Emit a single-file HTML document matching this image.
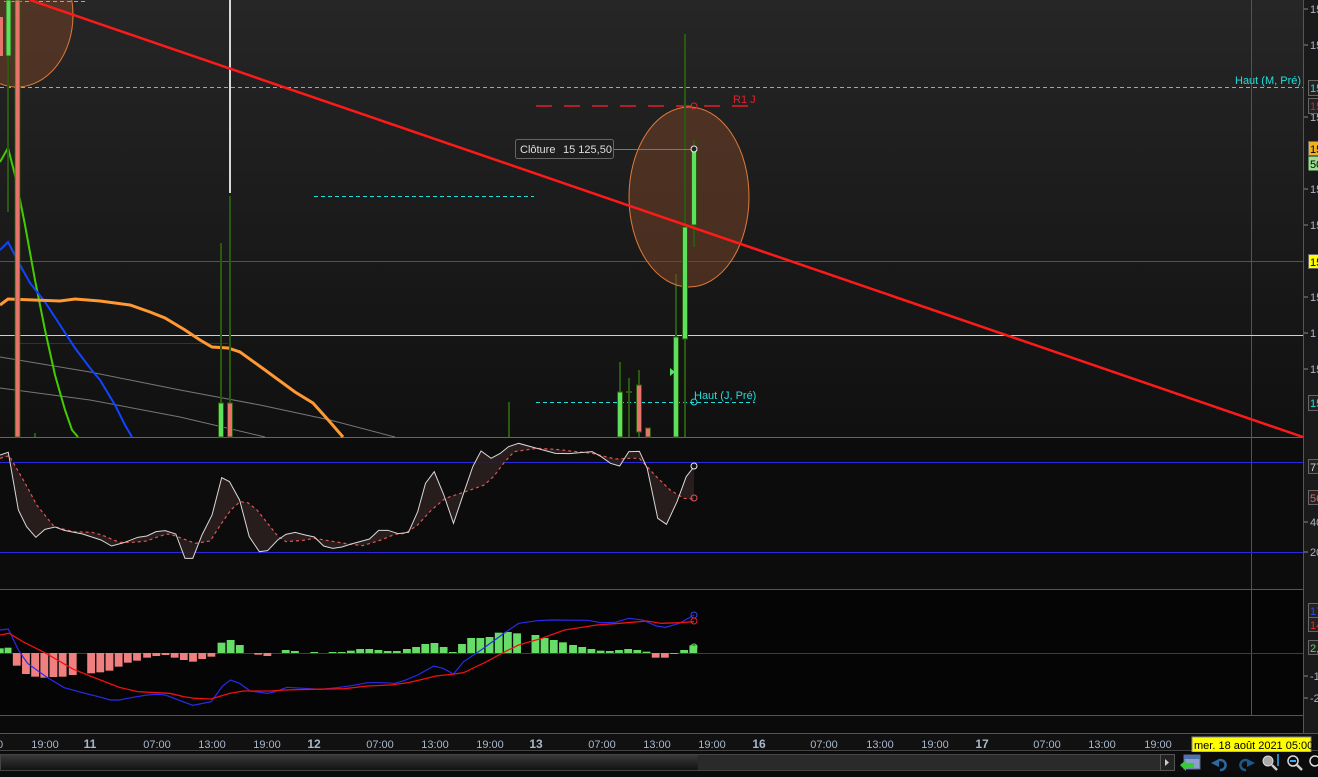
<!DOCTYPE html>
<html><head><meta charset="utf-8"><style>
html,body{margin:0;padding:0;background:#0a0a0a;}
body{width:1318px;height:772px;overflow:hidden;font-family:"Liberation Sans",sans-serif;}
svg text{font-family:"Liberation Sans",sans-serif;}
</style></head><body>
<svg width="1318" height="772" viewBox="0 0 1318 772" xmlns="http://www.w3.org/2000/svg">
<defs>
<linearGradient id="bg" x1="0" y1="0" x2="0" y2="1"><stop offset="0" stop-color="#262626"/><stop offset="1" stop-color="#101010"/></linearGradient>
<linearGradient id="sb" x1="0" y1="0" x2="0" y2="1"><stop offset="0" stop-color="#3a3a3a"/><stop offset="1" stop-color="#111"/></linearGradient>
</defs>
<rect x="0" y="0" width="1318" height="772" fill="#0a0a0a"/>
<rect x="0" y="0" width="1303" height="437" fill="url(#bg)"/>
<rect x="0" y="438" width="1303" height="151" fill="#0c0c0c"/>
<rect x="0" y="590" width="1303" height="125" fill="#050505"/>
<rect x="1303" y="0" width="15" height="733" fill="#1a1a1a"/>
<line x1="1303.5" y1="0" x2="1303.5" y2="733" stroke="#555"/>
<line x1="0" y1="437.5" x2="1303" y2="437.5" stroke="#666"/>
<line x1="0" y1="589.5" x2="1303" y2="589.5" stroke="#555"/>
<line x1="0" y1="715.5" x2="1303" y2="715.5" stroke="#555"/>
<line x1="0" y1="733.5" x2="1318" y2="733.5" stroke="#555"/>
<rect x="0" y="734" width="1318" height="17" fill="#111"/>
<line x1="0" y1="750.5" x2="1318" y2="750.5" stroke="#444"/>

<ellipse cx="17" cy="15" rx="56" ry="72" fill="rgba(115,65,40,0.55)" stroke="#e07a3a" stroke-width="1"/>
<line x1="4" y1="1.5" x2="88" y2="1.5" stroke="#22dddd" stroke-dasharray="4,3"/>
<line x1="0" y1="87.5" x2="1303" y2="87.5" stroke="#22dddd" stroke-dasharray="4,3"/>
<line x1="314" y1="196.5" x2="534" y2="196.5" stroke="#22dddd" stroke-dasharray="4,3"/>
<line x1="536" y1="402.5" x2="755" y2="402.5" stroke="#22dddd" stroke-dasharray="4,3"/>
<line x1="536" y1="106" x2="752" y2="106" stroke="#e0202a" stroke-width="1.5" stroke-dasharray="16,12"/>
<line x1="0" y1="261.5" x2="1303" y2="261.5" stroke="#8a3c3c"/>
<line x1="1251.5" y1="0" x2="1251.5" y2="715" stroke="#8a3c3c"/>
<line x1="0" y1="335.5" x2="1303" y2="335.5" stroke="#cfcfcf"/>
<line x1="20" y1="343.5" x2="228" y2="343.5" stroke="#1a1aee"/>
<line x1="230" y1="0" x2="230" y2="193" stroke="#d8d8d8" stroke-width="2"/>
<polyline points="0,357 90,372 180,390 260,405 330,420 395,437" fill="none" stroke="#777" stroke-width="1"/>
<polyline points="0,388 90,400 180,417 265,437" fill="none" stroke="#777" stroke-width="1"/>
<polyline points="0,162 8,148 15,175 25,225 35,280 45,330 55,375 65,410 72,430 78,437" fill="none" stroke="#44cc00" stroke-width="2"/>
<polyline points="0,250 8,242 20,265 30,283 45,302 60,325 75,348 90,368 100,380 115,405 125,425 132,437" fill="none" stroke="#1144ff" stroke-width="2"/>
<polyline points="0,305 8,299 60,301 75,299 100,301 130,305 150,312 165,318 185,330 200,340 212,347 228,348 240,352 265,370 295,392 313,403 330,422 343,437" fill="none" stroke="#ff9933" stroke-width="3"/>
<line x1="8" y1="56" x2="8" y2="212" stroke="#2a5a10" stroke-width="2"/>
<rect x="0" y="17" width="3" height="39" fill="#e8736b"/>
<rect x="6" y="0" width="5" height="56" fill="#5de05d" stroke="#2a5a10"/>
<rect x="15" y="0" width="5" height="437" fill="#e8736b" stroke="#2a5a10" stroke-width="0.8"/>
<line x1="221" y1="243" x2="221" y2="403" stroke="#2a5a10" stroke-width="2"/>
<line x1="230" y1="196" x2="230" y2="403" stroke="#2a5a10" stroke-width="2"/>
<rect x="218.5" y="403" width="5" height="34" fill="#5de05d" stroke="#2a5a10"/>
<rect x="227.5" y="403" width="5" height="34" fill="#e8736b" stroke="#2a5a10"/>
<line x1="35" y1="433" x2="35" y2="437" stroke="#2a5a10" stroke-width="2"/>
<line x1="509" y1="402" x2="509" y2="437" stroke="#2a5a10" stroke-width="2"/>
<line x1="620" y1="362" x2="620" y2="392" stroke="#2a5a10" stroke-width="2"/>
<rect x="617.5" y="392" width="5" height="45" fill="#5de05d" stroke="#2a5a10"/>
<line x1="629" y1="378" x2="629" y2="437" stroke="#2a5a10" stroke-width="2"/>
<line x1="626" y1="392" x2="632" y2="392" stroke="#2a5a10" stroke-width="2"/>
<line x1="639" y1="370" x2="639" y2="437" stroke="#2a5a10" stroke-width="2"/>
<rect x="636.5" y="385" width="5" height="47" fill="#e8736b" stroke="#2a5a10"/>
<rect x="645.5" y="428" width="5" height="9" fill="#e8736b" stroke="#2a5a10"/>
<line x1="676" y1="274" x2="676" y2="337" stroke="#2a5a10" stroke-width="2"/>
<rect x="673.5" y="337" width="5" height="100" fill="#5de05d" stroke="#2a5a10"/>
<polygon points="670,368 675,372 670,376" fill="#5de05d"/>
<ellipse cx="689" cy="197" rx="60" ry="90" fill="rgba(115,65,40,0.55)" stroke="#e07a3a" stroke-width="1"/>
<line x1="685" y1="34" x2="685" y2="437" stroke="#2a5a10" stroke-width="2"/>
<rect x="682.5" y="227" width="5" height="112" fill="#5de05d" stroke="#2a5a10"/>
<line x1="694" y1="140" x2="694" y2="247" stroke="#2a5a10" stroke-width="2"/>
<rect x="691.5" y="149" width="5" height="76" fill="#5de05d" stroke="#2a5a10"/>
<line x1="30" y1="0" x2="1303" y2="437" stroke="#ff1a1a" stroke-width="2.5"/>
<line x1="613" y1="149.5" x2="694" y2="149.5" stroke="#777"/>
<rect x="515.5" y="139.5" width="98" height="19" rx="2" fill="#1e1e1e" stroke="#666"/>
<text x="520" y="153" font-size="11" fill="#ddd">Clôture</text>
<text x="563" y="153" font-size="11" fill="#ddd">15 125,50</text>
<circle cx="694" cy="149" r="3" fill="#222" stroke="#eee"/>
<circle cx="694" cy="106" r="3" fill="none" stroke="#e0202a"/>
<circle cx="694" cy="402" r="3" fill="none" stroke="#22dddd"/>
<text x="733" y="103" font-size="11" fill="#e0202a">R1 J</text>
<text x="694" y="399" font-size="11" fill="#22dddd">Haut (J, Pré)</text>
<text x="1235" y="84" font-size="11" fill="#22dddd">Haut (M, Pré)</text>

<g font-size="11" fill="#a8b4c4">
<g stroke="#888"><line x1="1304" y1="9" x2="1308" y2="9"/><line x1="1304" y1="45" x2="1308" y2="45"/><line x1="1304" y1="117" x2="1308" y2="117"/><line x1="1304" y1="189" x2="1308" y2="189"/><line x1="1304" y1="225" x2="1308" y2="225"/><line x1="1304" y1="297" x2="1308" y2="297"/><line x1="1304" y1="333" x2="1308" y2="333"/><line x1="1304" y1="369" x2="1308" y2="369"/></g>
<text x="1310" y="13">15</text><text x="1310" y="49">15</text><text x="1310" y="121">15</text><text x="1310" y="193">15</text><text x="1310" y="229">15</text><text x="1310" y="301">15</text><text x="1310" y="337">1</text><text x="1310" y="373">15</text>
</g>
<rect x="1308.5" y="80.5" width="12" height="15" fill="#222" stroke="#666"/><text x="1310" y="92" font-size="11" fill="#22dddd">15</text>
<rect x="1308.5" y="98.5" width="12" height="15" fill="#222" stroke="#666"/><text x="1310" y="110" font-size="11" fill="#e0202a">15</text>
<rect x="1308.5" y="141.5" width="12" height="14" fill="#f0b020" stroke="#666"/><text x="1310" y="153" font-size="11" fill="#000">15</text>
<rect x="1308.5" y="156.5" width="12" height="14" fill="#99e090"/><text x="1310" y="168" font-size="11" fill="#000">50</text>
<rect x="1308.5" y="254.5" width="12" height="14" fill="#ffff00" stroke="#666"/><text x="1310" y="266" font-size="11" fill="#000">15</text>
<rect x="1308.5" y="395.5" width="12" height="15" fill="#222" stroke="#666"/><text x="1310" y="407" font-size="11" fill="#22dddd">15</text>

<line x1="0" y1="462.5" x2="1303" y2="462.5" stroke="#2a2adc"/>
<line x1="0" y1="552.5" x2="1303" y2="552.5" stroke="#2a2adc"/>
<g transform="translate(0,435) scale(0.459,0.33333)">
<polygon fill="#2a1f1f" opacity="0.9" points="0,60 18,52 40,225 58,275 78,307 98,283 120,276 140,286 180,297 220,315 243,333 270,323 300,307 320,303 340,290 360,287 383,297 403,370 420,370 440,300 462,240 483,128 500,140 522,195 543,305 565,350 583,347 605,315 623,298 643,292 665,300 685,306 705,333 725,340 745,336 765,327 805,312 825,286 845,286 868,296 890,292 910,230 927,145 946,110 967,180 988,265 1010,175 1030,95 1048,48 1070,70 1090,55 1108,35 1130,25 1170,40 1210,55 1240,56 1290,50 1310,65 1330,85 1350,93 1370,50 1393,49 1410,100 1433,250 1452,268 1475,200 1495,125 1512,95 1512,192 1490,190 1460,165 1430,125 1393,70 1370,70 1340,72 1290,55 1210,43 1170,40 1120,50 1100,80 1075,125 1055,150 1010,172 970,190 940,225 910,270 883,295 860,298 830,315 790,332 760,327 720,318 685,310 660,316 623,320 605,303 583,265 560,225 540,203 523,200 503,225 480,270 458,318 425,325 383,303 365,297 345,305 320,318 290,322 260,322 222,300 200,292 160,290 118,275 80,210 55,145 20,62 0,70"/>
<polyline fill="none" stroke="#e05555" stroke-width="1.2" stroke-dasharray="3,3" vector-effect="non-scaling-stroke" points="0,70 20,62 55,145 80,210 118,275 160,290 200,292 222,300 260,322 290,322 320,318 345,305 365,297 383,303 425,325 458,318 480,270 503,225 523,200 540,203 560,225 583,265 605,303 623,320 660,316 685,310 720,318 760,327 790,332 830,315 860,298 883,295 910,270 940,225 970,190 1010,172 1055,150 1075,125 1100,80 1120,50 1170,40 1210,43 1290,55 1340,72 1370,70 1393,70 1430,125 1460,165 1490,190 1512,192"/>
<polyline fill="none" stroke="#d8d8d8" stroke-width="1" vector-effect="non-scaling-stroke" points="0,60 18,52 40,225 58,275 78,307 98,283 120,276 140,286 180,297 220,315 243,333 270,323 300,307 320,303 340,290 360,287 383,297 403,370 420,370 440,300 462,240 483,128 500,140 522,195 543,305 565,350 583,347 605,315 623,298 643,292 665,300 685,306 705,333 725,340 745,336 765,327 805,312 825,286 845,286 868,296 890,292 910,230 927,145 946,110 967,180 988,265 1010,175 1030,95 1048,48 1070,70 1090,55 1108,35 1130,25 1170,40 1210,55 1240,56 1290,50 1310,65 1330,85 1350,93 1370,50 1393,49 1410,100 1433,250 1452,268 1475,200 1495,125 1512,95"/>
</g>
<circle cx="694" cy="466" r="3" fill="#111" stroke="#eee"/>
<circle cx="694" cy="498" r="3" fill="none" stroke="#e05555"/>
<g font-size="11" fill="#a8b4c4">
<line x1="1304" y1="522" x2="1308" y2="522" stroke="#888"/><text x="1310" y="526">40</text>
<line x1="1304" y1="552" x2="1308" y2="552" stroke="#888"/><text x="1310" y="556">20</text>
</g>
<rect x="1308.5" y="459.5" width="12" height="14" fill="#222" stroke="#666"/><text x="1310" y="471" font-size="11" fill="#ccc">77</text>
<rect x="1308.5" y="490.5" width="12" height="14" fill="#222" stroke="#666"/><text x="1310" y="502" font-size="11" fill="#e06060">56</text>

<line x1="0" y1="653.5" x2="1303" y2="653.5" stroke="#2a2adc"/>
<g transform="translate(0,580) scale(0.459,0.33333)">
<g fill="#66dd66">
<rect x="0" y="205" width="8" height="14"/><rect x="10" y="203" width="15" height="16"/>
<rect x="474" y="188" width="17" height="31"/><rect x="494" y="180" width="17" height="39"/><rect x="514" y="195" width="17" height="24"/>
<rect x="614" y="210" width="17" height="9"/><rect x="634" y="213" width="17" height="6"/><rect x="676" y="216" width="17" height="3"/>
<rect x="716" y="216" width="17" height="3"/><rect x="736" y="216" width="17" height="3"/><rect x="756" y="212" width="17" height="7"/><rect x="776" y="207" width="17" height="12"/><rect x="796" y="207" width="17" height="12"/><rect x="816" y="210" width="17" height="9"/><rect x="836" y="213" width="17" height="6"/><rect x="856" y="213" width="17" height="6"/><rect x="878" y="207" width="17" height="12"/><rect x="898" y="201" width="17" height="18"/><rect x="918" y="192" width="17" height="27"/><rect x="938" y="189" width="17" height="30"/><rect x="958" y="201" width="17" height="18"/><rect x="978" y="216" width="17" height="3"/><rect x="998" y="192" width="17" height="27"/><rect x="1018" y="174" width="17" height="45"/><rect x="1038" y="174" width="17" height="45"/><rect x="1058" y="171" width="17" height="48"/><rect x="1078" y="158" width="17" height="61"/><rect x="1098" y="156" width="17" height="63"/><rect x="1118" y="160" width="17" height="59"/>
<rect x="1158" y="165" width="17" height="54"/><rect x="1178" y="174" width="17" height="45"/><rect x="1198" y="180" width="17" height="39"/><rect x="1218" y="187" width="17" height="32"/><rect x="1240" y="195" width="17" height="24"/><rect x="1260" y="201" width="17" height="18"/><rect x="1280" y="207" width="17" height="12"/><rect x="1300" y="212" width="17" height="7"/><rect x="1320" y="213" width="17" height="6"/><rect x="1340" y="210" width="17" height="9"/><rect x="1360" y="207" width="17" height="12"/><rect x="1380" y="210" width="17" height="9"/><rect x="1400" y="215" width="17" height="4"/><rect x="1482" y="210" width="17" height="9"/><rect x="1502" y="196" width="17" height="23"/>
</g>
<g fill="#f08080">
<rect x="28" y="219" width="17" height="38"/><rect x="48" y="219" width="17" height="63"/><rect x="68" y="219" width="17" height="71"/><rect x="88" y="219" width="17" height="74"/><rect x="108" y="219" width="17" height="72"/><rect x="128" y="219" width="17" height="71"/><rect x="150" y="219" width="17" height="66"/>
<rect x="190" y="219" width="17" height="61"/><rect x="210" y="219" width="17" height="58"/><rect x="230" y="219" width="17" height="53"/><rect x="250" y="219" width="17" height="41"/><rect x="270" y="219" width="17" height="29"/><rect x="290" y="219" width="17" height="23"/><rect x="312" y="219" width="17" height="14"/><rect x="332" y="219" width="17" height="9"/><rect x="352" y="219" width="17" height="6"/><rect x="372" y="219" width="17" height="14"/><rect x="392" y="219" width="17" height="21"/><rect x="412" y="219" width="17" height="26"/><rect x="432" y="219" width="17" height="18"/><rect x="452" y="219" width="17" height="11"/>
<rect x="554" y="219" width="17" height="5"/><rect x="574" y="219" width="17" height="9"/><rect x="1420" y="219" width="17" height="14"/><rect x="1440" y="219" width="17" height="14"/><rect x="1460" y="219" width="17" height="3"/>
</g>
<polyline fill="none" stroke="#2a2aee" stroke-width="1.2" vector-effect="non-scaling-stroke" points="0,150 18,147 40,210 60,250 100,290 140,323 180,338 220,352 240,360 260,360 290,352 320,345 345,343 360,345 385,358 420,376 460,365 485,318 502,300 522,310 545,333 583,340 600,335 625,322 660,325 700,328 740,322 770,316 800,308 830,308 860,310 880,302 910,285 945,258 965,265 988,282 1010,245 1050,208 1100,158 1130,130 1170,122 1200,120 1280,121 1310,128 1340,127 1370,115 1400,120 1430,138 1450,142 1480,130 1512,105"/>
<polyline fill="none" stroke="#ee1111" stroke-width="1.3" vector-effect="non-scaling-stroke" points="0,165 20,160 50,185 100,220 160,268 200,290 260,322 300,335 340,338 370,340 400,350 425,355 460,357 500,340 530,333 590,333 620,330 680,328 750,326 800,318 850,315 890,308 920,298 950,288 990,282 1010,278 1060,245 1100,215 1130,195 1180,175 1230,150 1300,135 1350,130 1410,123 1440,130 1480,128 1512,125"/>
</g>
<circle cx="694" cy="615" r="3" fill="none" stroke="#3344ff"/>
<circle cx="694" cy="621" r="3" fill="none" stroke="#ee2222"/>
<circle cx="694" cy="647" r="3" fill="none" stroke="#66dd66"/>
<g font-size="11" fill="#a8b4c4">
<line x1="1304" y1="676" x2="1308" y2="676" stroke="#888"/><text x="1310" y="680">-1</text>
<line x1="1304" y1="698" x2="1308" y2="698" stroke="#888"/><text x="1310" y="702">-2</text>
</g>
<rect x="1308.5" y="603.5" width="12" height="14" fill="#222" stroke="#666"/><text x="1310" y="615" font-size="11" fill="#3344ff">17</text>
<rect x="1308.5" y="617.5" width="12" height="14" fill="#222" stroke="#666"/><text x="1310" y="629" font-size="11" fill="#ee2222">14</text>
<rect x="1308.5" y="640.5" width="12" height="14" fill="#222" stroke="#666"/><text x="1310" y="652" font-size="11" fill="#55dd55">2,</text>

<g font-size="11" fill="#a8b8cc" text-anchor="middle">
<text x="0" y="748">0</text><text x="45" y="748">19:00</text><text x="90" y="748" font-weight="bold" font-size="12">11</text><text x="157" y="748">07:00</text><text x="212" y="748">13:00</text><text x="267" y="748">19:00</text><text x="314" y="748" font-weight="bold" font-size="12">12</text><text x="380" y="748">07:00</text><text x="435" y="748">13:00</text><text x="490" y="748">19:00</text><text x="536" y="748" font-weight="bold" font-size="12">13</text><text x="602" y="748">07:00</text><text x="657" y="748">13:00</text><text x="712" y="748">19:00</text><text x="759" y="748" font-weight="bold" font-size="12">16</text><text x="824" y="748">07:00</text><text x="880" y="748">13:00</text><text x="935" y="748">19:00</text><text x="982" y="748" font-weight="bold" font-size="12">17</text><text x="1047" y="748">07:00</text><text x="1102" y="748">13:00</text><text x="1158" y="748">19:00</text>
</g>
<rect x="1192" y="737" width="119" height="15" fill="#ffff00" stroke="#888"/>
<text x="1194" y="749" font-size="11" fill="#000">mer. 18 août 2021 05:00</text>

<rect x="0" y="752" width="1318" height="20" fill="#0c0c0c"/>
<rect x="0.5" y="754.5" width="1174" height="16" fill="url(#sb)" stroke="#444"/>
<rect x="698" y="755" width="462" height="15" fill="#2a2a2a"/>
<rect x="1160.5" y="754.5" width="14" height="16" fill="#222" stroke="#555"/>
<polygon points="1165,759 1169,762.5 1165,766" fill="#ccc"/>
<rect x="1184" y="755" width="16" height="14" fill="#8aa0c8" stroke="#5a6a90"/>
<rect x="1184" y="755" width="16" height="4" fill="#5070b0"/>
<polygon points="1180,765 1186,760 1186,763 1194,763 1194,768 1186,768 1186,771" fill="#33cc33"/>
<path d="M1216 763 a5 5 0 1 1 4 7" fill="none" stroke="#2a6aa0" stroke-width="2.5"/>
<polygon points="1211,763 1219,759 1219,767" fill="#2a6aa0"/>
<path d="M1250 763 a5 5 0 1 0 -4 7" fill="none" stroke="#1a5a90" stroke-width="2.5"/>
<polygon points="1255,763 1247,759 1247,767" fill="#1a5a90"/>
<circle cx="1268" cy="761" r="5" fill="#aaa" stroke="#ddd"/><line x1="1272" y1="765" x2="1277" y2="770" stroke="#ccc" stroke-width="2.5"/>
<line x1="1278" y1="754" x2="1278" y2="766" stroke="#3aaaee" stroke-width="1.5"/>
<circle cx="1293" cy="761" r="5" fill="none" stroke="#ddd" stroke-width="1.5"/><line x1="1290" y1="761" x2="1296" y2="761" stroke="#3aaaee" stroke-width="2"/><line x1="1297" y1="765" x2="1302" y2="770" stroke="#ccc" stroke-width="2.5"/>
<circle cx="1315" cy="761" r="5" fill="none" stroke="#ddd" stroke-width="1.5"/>
</svg>
</body></html>
